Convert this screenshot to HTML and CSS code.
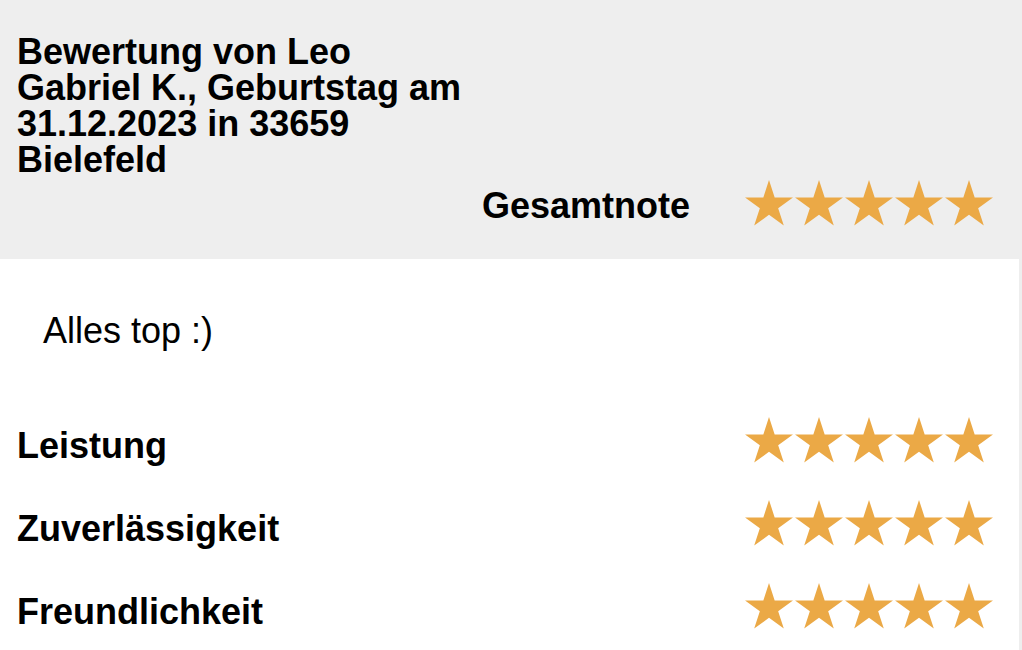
FILE: index.html
```html
<!DOCTYPE html>
<html lang="de">
<head>
    <meta charset="UTF-8">
    <meta name="viewport" content="width=device-width, initial-scale=1.0">
    <title>Bewertung</title>
    <link rel="stylesheet" href="styles.css">
</head>
<body>
    <div class="review">
        <div class="review-header">
            <h1 class="review-title">Bewertung von Leo Gabriel K., Geburtstag am 31.12.2023 in 33659 Bielefeld</h1>
            <div class="total-row">
                <span class="total-label">Gesamtnote</span>
                <div class="stars">
                    <svg class="star" viewBox="0 0 48 46"><path d="M24 0L29.66 17.41L47.97 17.41L33.16 28.18L38.81 45.59L24 34.83L9.19 45.59L14.84 28.18L0.03 17.41L18.34 17.41Z"/></svg>
                    <svg class="star" viewBox="0 0 48 46"><path d="M24 0L29.66 17.41L47.97 17.41L33.16 28.18L38.81 45.59L24 34.83L9.19 45.59L14.84 28.18L0.03 17.41L18.34 17.41Z"/></svg>
                    <svg class="star" viewBox="0 0 48 46"><path d="M24 0L29.66 17.41L47.97 17.41L33.16 28.18L38.81 45.59L24 34.83L9.19 45.59L14.84 28.18L0.03 17.41L18.34 17.41Z"/></svg>
                    <svg class="star" viewBox="0 0 48 46"><path d="M24 0L29.66 17.41L47.97 17.41L33.16 28.18L38.81 45.59L24 34.83L9.19 45.59L14.84 28.18L0.03 17.41L18.34 17.41Z"/></svg>
                    <svg class="star" viewBox="0 0 48 46"><path d="M24 0L29.66 17.41L47.97 17.41L33.16 28.18L38.81 45.59L24 34.83L9.19 45.59L14.84 28.18L0.03 17.41L18.34 17.41Z"/></svg>
                </div>
            </div>
        </div>

        <div class="review-body">
            <p class="review-text">Alles top :)</p>

            <div class="rating-row">
                <span class="rating-label">Leistung</span>
                <div class="stars">
                    <svg class="star" viewBox="0 0 48 46"><path d="M24 0L29.66 17.41L47.97 17.41L33.16 28.18L38.81 45.59L24 34.83L9.19 45.59L14.84 28.18L0.03 17.41L18.34 17.41Z"/></svg>
                    <svg class="star" viewBox="0 0 48 46"><path d="M24 0L29.66 17.41L47.97 17.41L33.16 28.18L38.81 45.59L24 34.83L9.19 45.59L14.84 28.18L0.03 17.41L18.34 17.41Z"/></svg>
                    <svg class="star" viewBox="0 0 48 46"><path d="M24 0L29.66 17.41L47.97 17.41L33.16 28.18L38.81 45.59L24 34.83L9.19 45.59L14.84 28.18L0.03 17.41L18.34 17.41Z"/></svg>
                    <svg class="star" viewBox="0 0 48 46"><path d="M24 0L29.66 17.41L47.97 17.41L33.16 28.18L38.81 45.59L24 34.83L9.19 45.59L14.84 28.18L0.03 17.41L18.34 17.41Z"/></svg>
                    <svg class="star" viewBox="0 0 48 46"><path d="M24 0L29.66 17.41L47.97 17.41L33.16 28.18L38.81 45.59L24 34.83L9.19 45.59L14.84 28.18L0.03 17.41L18.34 17.41Z"/></svg>
                </div>
            </div>

            <div class="rating-row">
                <span class="rating-label">Zuverlässigkeit</span>
                <div class="stars">
                    <svg class="star" viewBox="0 0 48 46"><path d="M24 0L29.66 17.41L47.97 17.41L33.16 28.18L38.81 45.59L24 34.83L9.19 45.59L14.84 28.18L0.03 17.41L18.34 17.41Z"/></svg>
                    <svg class="star" viewBox="0 0 48 46"><path d="M24 0L29.66 17.41L47.97 17.41L33.16 28.18L38.81 45.59L24 34.83L9.19 45.59L14.84 28.18L0.03 17.41L18.34 17.41Z"/></svg>
                    <svg class="star" viewBox="0 0 48 46"><path d="M24 0L29.66 17.41L47.97 17.41L33.16 28.18L38.81 45.59L24 34.83L9.19 45.59L14.84 28.18L0.03 17.41L18.34 17.41Z"/></svg>
                    <svg class="star" viewBox="0 0 48 46"><path d="M24 0L29.66 17.41L47.97 17.41L33.16 28.18L38.81 45.59L24 34.83L9.19 45.59L14.84 28.18L0.03 17.41L18.34 17.41Z"/></svg>
                    <svg class="star" viewBox="0 0 48 46"><path d="M24 0L29.66 17.41L47.97 17.41L33.16 28.18L38.81 45.59L24 34.83L9.19 45.59L14.84 28.18L0.03 17.41L18.34 17.41Z"/></svg>
                </div>
            </div>

            <div class="rating-row">
                <span class="rating-label">Freundlichkeit</span>
                <div class="stars">
                    <svg class="star" viewBox="0 0 48 46"><path d="M24 0L29.66 17.41L47.97 17.41L33.16 28.18L38.81 45.59L24 34.83L9.19 45.59L14.84 28.18L0.03 17.41L18.34 17.41Z"/></svg>
                    <svg class="star" viewBox="0 0 48 46"><path d="M24 0L29.66 17.41L47.97 17.41L33.16 28.18L38.81 45.59L24 34.83L9.19 45.59L14.84 28.18L0.03 17.41L18.34 17.41Z"/></svg>
                    <svg class="star" viewBox="0 0 48 46"><path d="M24 0L29.66 17.41L47.97 17.41L33.16 28.18L38.81 45.59L24 34.83L9.19 45.59L14.84 28.18L0.03 17.41L18.34 17.41Z"/></svg>
                    <svg class="star" viewBox="0 0 48 46"><path d="M24 0L29.66 17.41L47.97 17.41L33.16 28.18L38.81 45.59L24 34.83L9.19 45.59L14.84 28.18L0.03 17.41L18.34 17.41Z"/></svg>
                    <svg class="star" viewBox="0 0 48 46"><path d="M24 0L29.66 17.41L47.97 17.41L33.16 28.18L38.81 45.59L24 34.83L9.19 45.59L14.84 28.18L0.03 17.41L18.34 17.41Z"/></svg>
                </div>
            </div>
        </div>
    </div>
</body>
</html>
```

FILE: styles.css
```css
body {
    font-family: "Liberation Sans", Helvetica, Arial, sans-serif;
    background-color: #eeeeee;
    color: #000;
    margin: 0;
    font-size: 36px;
    line-height: 36px;
}
.review {
    width: 1019px;
}
.review-header {
    background-color: #eeeeee;
    padding: 33.5px 26px 33px 17px;
}
.review-title {
    margin: 0;
    width: 455px;
    font-size: 36px;
    line-height: 36px;
    font-weight: bold;
}
.total-row {
    display: flex;
    justify-content: flex-end;
    align-items: flex-start;
    gap: 55px;
    margin-top: 2.5px;
}
.total-label {
    font-weight: bold;
    margin-top: 7.5px;
}
.stars {
    display: flex;
    gap: 2px;
}
.star {
    width: 48px;
    height: 46px;
    fill: #eba946;
    display: block;
}
.review-body {
    background-color: #fff;
    padding: 53.5px 26px 22px 17px;
}
.review-text {
    margin: 0 0 68.5px 26px;
}
.rating-row {
    display: flex;
    justify-content: space-between;
    align-items: flex-start;
    margin-bottom: 36.5px;
}
.rating-row:last-child {
    margin-bottom: 0;
}
.rating-label {
    font-weight: bold;
    margin-top: 10.5px;
}
```
